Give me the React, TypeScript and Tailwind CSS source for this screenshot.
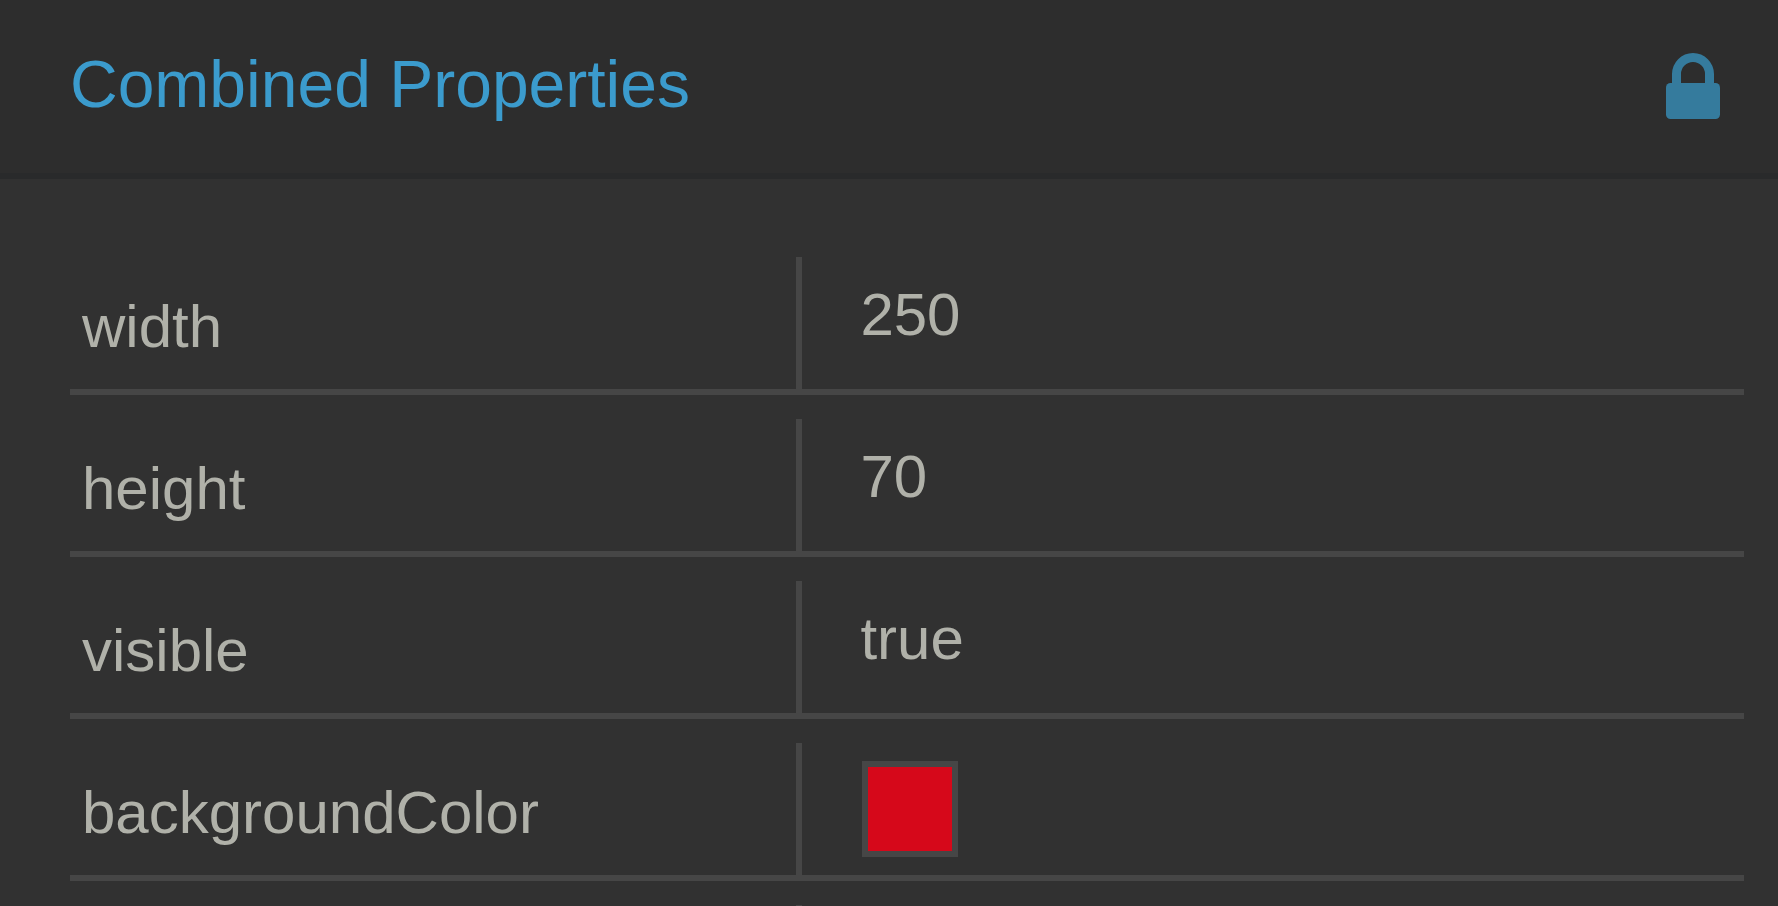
import type { ReactNode } from 'react'

type Property = {
  name: string
  value: ReactNode
}

const properties: Property[] = [
  { name: 'width', value: '250' },
  { name: 'height', value: '70' },
  { name: 'visible', value: 'true' },
  { name: 'backgroundColor', value: <ColorSwatch /> },
]

function ColorSwatch() {
  return (
    <span className="-mt-2.5 ml-0.5 block size-24 border-6 border-[#464646] bg-[#d6081a]" />
  )
}

function LockIcon() {
  return (
    <svg viewBox="0 0 54 66" className="h-[66px] w-[54px]" fill="currentColor" aria-hidden="true">
      <path d="M6 31V21a21 21 0 0 1 42 0v10h-9V21a12 12 0 0 0-24 0v10z" />
      <rect y="30" width="54" height="36" rx="4.5" />
    </svg>
  )
}

function PropertyRow({ name, value }: Property) {
  return (
    <div className="grid h-[138px] shrink-0 grid-cols-[7fr_9fr] border-b-6 border-[#464646] text-[60px] leading-[60px]">
      <dt className="border-r-6 border-[#464646] pt-10 pl-3">{name}</dt>
      <dd className="pt-7 pl-[58px]">{value}</dd>
    </div>
  )
}

export default function App() {
  return (
    <main className="flex h-screen flex-col overflow-hidden bg-[#313131] font-['Liberation_Sans',Arial,sans-serif] text-[#b0b1a9]">
      <header className="flex shrink-0 items-end justify-between border-b-6 border-[#292a2b] bg-[#2d2d2d] pt-[49px] pr-[58px] pb-[54px] pl-[70px]">
        <h1 className="text-[66px] leading-[70px] text-[#3b9bcd]">Combined Properties</h1>
        <button type="button" aria-label="Lock" className="text-[#357b9d]">
          <LockIcon />
        </button>
      </header>

      <dl className="flex flex-col gap-6 pt-[78px] pr-[34px] pl-[70px]">
        {properties.map((property) => (
          <PropertyRow key={property.name} {...property} />
        ))}
        {/* next, still unfilled row */}
        <PropertyRow name="" value={null} />
      </dl>
    </main>
  )
}
